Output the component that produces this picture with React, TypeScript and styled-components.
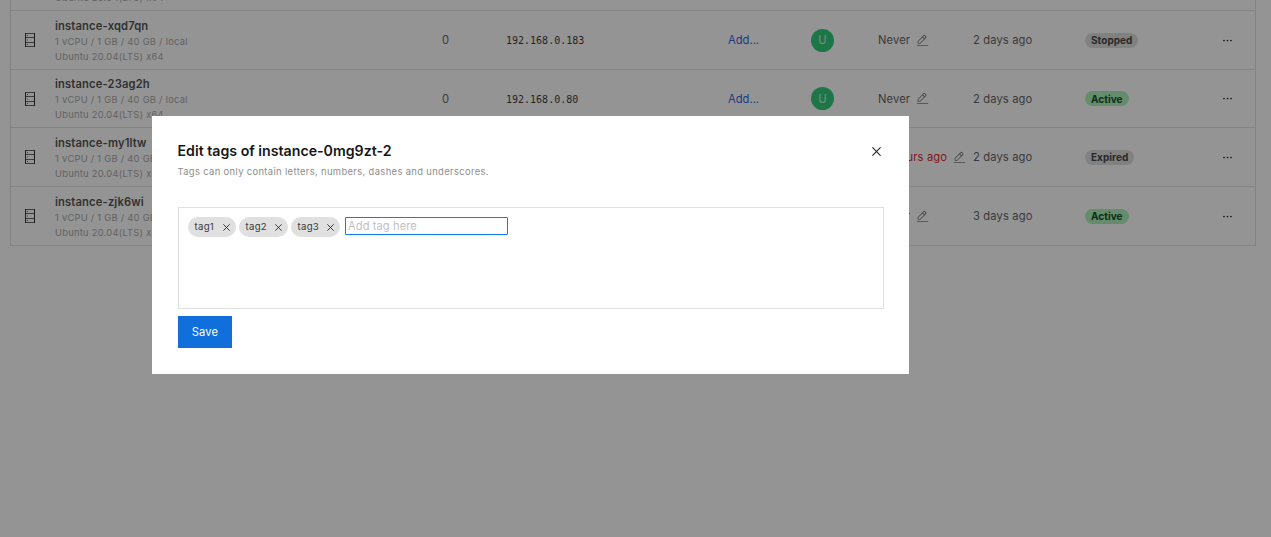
import React from "react";
import styled, { createGlobalStyle } from "styled-components";

const Global = createGlobalStyle`
  * { box-sizing: border-box; }
  body { margin: 0; background: #fff; overflow: hidden; font-family: Inter, "Liberation Sans", sans-serif; color: #5a5a5a; }
`;

const Page = styled.div`
  height: 537px;
  position: relative;
  overflow: hidden;
  padding: 0 15px 0 10px;
`;

const Row = styled.div`
  height: 58.65px;
  padding-top: 0.7px;
  display: grid;
  grid-template-columns: 44px 387px 64px 222px 83px 67px 95px 112px 138px 1fr;
  align-items: center;
  overflow: hidden;
  border: 1px solid #e0e0e0;
  border-top: 0;
  font-size: 11.2px;
  line-height: 16px;
  letter-spacing: 0.13px;
  white-space: nowrap;
`;

const RowIcon = styled.span`
  padding-left: 14px;
  display: flex;
`;

const Identity = styled.div`
  align-self: start;
  padding-top: 5.95px;
`;

const Name = styled.div`
  font-size: 11.2px;
  line-height: 16px;
  font-weight: 600;
  letter-spacing: 0.15px;
  color: #484848;
`;

const Spec = styled.div`
  font-size: 9.3px;
  line-height: 15px;
  letter-spacing: 0.28px;
  color: #a4a4a4;
`;

const Address = styled.span`
  font: 10px/16px "DejaVu Sans Mono", "Liberation Mono", monospace;
  letter-spacing: 0;
  padding-top: 2px;
  color: #303030;
`;

const AddLink = styled.a`
  letter-spacing: 0;
  color: #1a5ce0;
`;

const Avatar = styled.span`
  width: 23px;
  height: 23px;
  border-radius: 50%;
  display: grid;
  place-items: center;
  background: #24c870;
  color: #c8f0da;
  letter-spacing: 0;
`;

const Expiry = styled.span<{ $late?: boolean }>`
  display: flex;
  align-items: center;
  gap: 6px;
  color: ${(p) => (p.$late ? "#e0141e" : "inherit")};
`;

const Badge = styled.span<{ $active: boolean }>`
  justify-self: start;
  height: 15px;
  padding: 0 6px;
  border-radius: 8px;
  display: flex;
  align-items: center;
  font-size: 10px;
  font-weight: 700;
  letter-spacing: 0.05px;
  background: ${(p) => (p.$active ? "#a8f0b8" : "#dcdcdc")};
  color: ${(p) => (p.$active ? "#044317" : "#393939")};
`;

const Overlay = styled.div`
  position: absolute;
  inset: 0;
  background: rgba(22, 22, 22, 0.46);
  padding: 116px 0 0 152px;
`;

const Dialog = styled.section`
  width: 757px;
  height: 258px;
  background: #fff;
  padding: 25px 25px 26px 26px;
`;

const DialogHead = styled.header`
  display: flex;
  justify-content: space-between;
  align-items: center;
  height: 20px;
  padding-right: 3px;
`;

const Title = styled.h2`
  margin: 0 0 0 -0.5px;
  font-size: 14.18px;
  line-height: 20px;
  font-weight: 600;
  color: #161616;
`;

const Hint = styled.p`
  margin: 3px 0 0 -0.5px;
  font-size: 9.4px;
  line-height: 16px;
  letter-spacing: 0.36px;
  color: #8d8d8d;
`;

const TagBox = styled.div`
  height: 102px;
  margin-top: 27px;
  border: 1px solid #e0e0e0;
  padding: 9px;
  display: flex;
  align-items: flex-start;
  gap: 3px;
`;

const Tag = styled.span<{ $width: number }>`
  width: ${(p) => p.$width}px;
  height: 20px;
  padding: 0 6px 0 6.5px;
  border-radius: 10px;
  background: #e0e0e0;
  color: #393939;
  display: flex;
  align-items: center;
  justify-content: space-between;
  font-size: 9.6px;
  line-height: 12px;
  letter-spacing: 0.3px;
`;

const TagInput = styled.input`
  width: 163px;
  height: 18px;
  margin: 0 0 0 2px;
  padding: 0 2px;
  border: 1px solid #0f7bf0;
  border-radius: 1px;
  outline: 0;
  font: 11.1px/14px Inter, sans-serif;
  letter-spacing: 0.1px;
  &::placeholder { color: #bfbfbf; }
`;

const SaveButton = styled.button`
  display: block;
  width: 54px;
  height: 32px;
  margin-top: 7px;
  padding: 0;
  border: 0;
  background: #116fdb;
  color: #fff;
  font: 11.2px/16px Inter, sans-serif;
  letter-spacing: 0.13px;
`;

const ServerIcon = () => (
  <svg width="10" height="14" viewBox="0 0 10 14" fill="none" strokeWidth="1">
    <path d="M0 .5h10M0 4.500h10M0 9.500h10M0 13.500h10" stroke="#5c5c5c" />
    <path d="M.5 0v14M9.500 0v14" stroke="#262626" />
    <path d="M2 2.500h1M2 7h1M2 11.500h1" stroke="#5c5c5c" />
  </svg>
);

const EditIcon = () => (
  <svg width="13" height="13" viewBox="0 0 32 32" fill="#6f6f6f">
    <path d="M2 27h28v2H2zM25.4 9a2 2 0 0 0 0-2.8l-3.6-3.6a2 2 0 0 0-2.8 0l-15 15V24h6.4zm-5-5L24 7.600l-3 3L17.400 7zM6 22v-3.600l10-10 3.600 3.600-10 10z" />
  </svg>
);

const MenuIcon = () => (
  <svg width="9" height="3" viewBox="0 0 9 3" fill="#111">
    <circle cx="1" cy="1.500" r=".85" />
    <circle cx="4.500" cy="1.500" r=".85" />
    <circle cx="8" cy="1.500" r=".85" />
  </svg>
);

const CloseIcon = ({ size }: { size: number }) => (
  <svg width={size} height={size} viewBox="0 0 8 8" fill="none" stroke="#262626" strokeWidth="1">
    <path d="M.4.4l7.200 7.200M7.600.4L.4 7.600" />
  </svg>
);

interface Instance {
  name: string;
  ip: string;
  expires: string;
  created: string;
  status: string;
}

const instances: Instance[] = [
  { name: "instance-p4k2ra", ip: "", expires: "", created: "", status: "" },
  { name: "instance-xqd7qn", ip: "192.168.0.183", expires: "Never", created: "2 days ago", status: "Stopped" },
  { name: "instance-23ag2h", ip: "192.168.0.80", expires: "Never", created: "2 days ago", status: "Active" },
  { name: "instance-my1ltw", ip: "192.168.0.12", expires: "21 hours ago", created: "2 days ago", status: "Expired" },
  { name: "instance-zjk6wi", ip: "192.168.0.14", expires: "Never", created: "3 days ago", status: "Active" },
];

const Table = styled.main`
  margin-top: -47.6px;
`;

const InstanceRow = ({ item }: { item: Instance }) => (
  <Row>
    <RowIcon>{item.ip && <ServerIcon />}</RowIcon>
    <Identity>
      <Name>{item.name}</Name>
      <Spec>1 vCPU / 1 GB / 40 GB / local</Spec>
      <Spec>Ubuntu 20.04(LTS) x64</Spec>
    </Identity>
    {item.ip && (
      <>
        <span>0</span>
        <Address>{item.ip}</Address>
        <AddLink>Add...</AddLink>
        <Avatar>U</Avatar>
        <Expiry $late={item.status === "Expired"}>
          {item.expires}
          <EditIcon />
        </Expiry>
        <span>{item.created}</span>
        <Badge $active={item.status === "Active"}>{item.status}</Badge>
        <MenuIcon />
      </>
    )}
  </Row>
);

export default function App() {
  return (
    <Page>
      <Global />
      <Table>
        {instances.map((item) => (
          <InstanceRow key={item.name} item={item} />
        ))}
      </Table>
      <Overlay>
        <Dialog>
          <DialogHead>
            <Title>Edit tags of instance-0mg9zt-2</Title>
            <CloseIcon size={9} />
          </DialogHead>
          <Hint>Tags can only contain letters, numbers, dashes and underscores.</Hint>
          <TagBox>
            <Tag $width={48}>tag1<CloseIcon size={7} /></Tag>
            <Tag $width={49}>tag2<CloseIcon size={7} /></Tag>
            <Tag $width={49}>tag3<CloseIcon size={7} /></Tag>
            <TagInput placeholder="Add tag here" />
          </TagBox>
          <SaveButton>Save</SaveButton>
        </Dialog>
      </Overlay>
    </Page>
  );
}
